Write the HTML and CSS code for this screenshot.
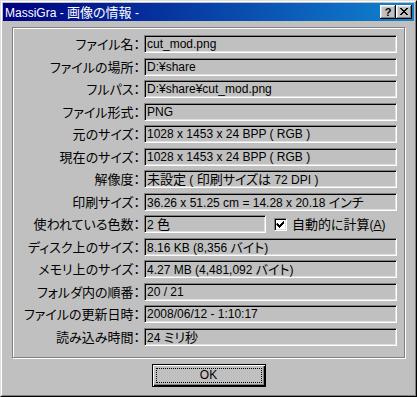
FILE: index.html
```html
<!DOCTYPE html>
<html lang="ja">
<head>
<meta charset="utf-8">
<link rel="stylesheet" href="styles.css">
</head>
<body>
<div class="window">
  <div class="frame">
    <div class="titlebar">
      <span class="title">MassiGra - <span class="ja">画像の情報</span> -</span>
      <div class="tbtns">
        <span class="tbtn q">?</span>
        <span class="tbtn x"><svg width="8" height="7" viewBox="0 0 8 7"><path d="M0 0h2v1h1v1h2v-1h1v-1h2v1h-1v1h-1v1h-1v1h1v1h1v1h1v1h-2v-1h-1v-1h-2v1h-1v1h-2v-1h1v-1h1v-1h1v-1h-1v-1h-1v-1h-1z" fill="#000"/></svg></span>
      </div>
    </div>
    <div class="content">
      <div class="group">
        <div class="lbl">ファイル名：</div><div class="fld">cut_mod.png</div>
        <div class="lbl">ファイルの場所：</div><div class="fld">D:¥share</div>
        <div class="lbl">フルパス：</div><div class="fld">D:¥share¥cut_mod.png</div>
        <div class="lbl">ファイル形式：</div><div class="fld">PNG</div>
        <div class="lbl">元のサイズ：</div><div class="fld">1028 x 1453 x 24 BPP ( RGB )</div>
        <div class="lbl">現在のサイズ：</div><div class="fld">1028 x 1453 x 24 BPP ( RGB )</div>
        <div class="lbl">解像度：</div><div class="fld"><span class="ja">未設定</span> ( <span class="ja">印刷サイズは</span> 72 DPI )</div>
        <div class="lbl">印刷サイズ：</div><div class="fld">36.26 x 51.25 cm = 14.28 x 20.18 <span class="ja">インチ</span></div>
        <div class="lbl">使われている色数：</div>
        <div class="colrow">
          <div class="fld short">2 <span class="ja">色</span></div>
          <span class="chk"><svg width="9" height="9" viewBox="0 0 9 9"><path d="M1 3h1v1h1v1h1v-1h1v-1h1v-1h1v-1h1v3h-1v1h-1v1h-1v1h-1v1h-1v-1h-1v-1h-1v-1h-1z" fill="#000"/></svg></span>
          <span class="chklbl"><span class="ja">自動的に計算</span>(<u>A</u>)</span>
        </div>
        <div class="lbl">ディスク上のサイズ：</div><div class="fld">8.16 KB (8,356 <span class="ja">バイト</span>)</div>
        <div class="lbl">メモリ上のサイズ：</div><div class="fld">4.27 MB (4,481,092 <span class="ja">バイト</span>)</div>
        <div class="lbl">フォルダ内の順番：</div><div class="fld">20 / 21</div>
        <div class="lbl">ファイルの更新日時：</div><div class="fld">2008/06/12 - 1:10:17</div>
        <div class="lbl">読み込み時間：</div><div class="fld">24 <span class="ja">ミリ秒</span></div>
      </div>
      <div class="btnrow">
        <div class="okbtn"><span class="focus">OK</span></div>
      </div>
    </div>
  </div>
</div>
</body>
</html>
```
FILE: styles.css
```css
html, body {
  margin: 0;
  padding: 0;
  background: #c0c0c0;
}
body {
  font-family: "Liberation Sans", "Noto Sans CJK JP", sans-serif;
  font-size: 12px;
  color: #000;
  font-feature-settings: "palt";
}
.ja {
  font-family: "Noto Sans CJK JP", sans-serif;
  font-size: 13px;
  line-height: 14px;
}
.window {
  width: 417px;
  height: 397px;
  box-sizing: border-box;
  border: 1px solid;
  border-color: #dfdfdf #000 #000 #dfdfdf;
  background: #c0c0c0;
}
.frame {
  height: 100%;
  box-sizing: border-box;
  border: 1px solid;
  border-color: #fff #808080 #808080 #fff;
  padding: 1px;
  display: flex;
  flex-direction: column;
}
.titlebar {
  height: 18px;
  flex: none;
  display: flex;
  align-items: center;
  justify-content: space-between;
  padding-left: 2px;
  background: linear-gradient(to right, #000080, #1084d0);
  color: #fff;
}
.title {
  font-size: 12px;
  line-height: 14px;
  white-space: nowrap;
}
.tbtns {
  display: flex;
  margin-right: 2px;
}
.tbtn {
  width: 16px;
  height: 14px;
  box-sizing: border-box;
  background: #c0c0c0;
  box-shadow: inset -1px -1px 0 #000, inset 1px 1px 0 #fff, inset -2px -2px 0 #808080, inset 2px 2px 0 #dfdfdf;
  display: flex;
  align-items: center;
  justify-content: center;
  color: #000;
}
.tbtn.q {
  font-family: "Liberation Sans", sans-serif;
  font-weight: bold;
  font-size: 11px;
  line-height: 12px;
  padding-bottom: 1px;
}
.tbtn.x svg {
  display: block;
  margin-top: -1px;
}
.content {
  flex: 1;
  padding: 6px 9px 0 9px;
  display: flex;
  flex-direction: column;
}
.group {
  height: 331px;
  box-sizing: border-box;
  border: 1px solid #808080;
  box-shadow: 1px 1px 0 #fff, inset 1px 1px 0 #fff;
  padding: 7px 7px 0 0;
  display: grid;
  grid-template-columns: 1fr 253px;
  grid-auto-rows: 18px;
  row-gap: 4.5px;
  column-gap: 4px;
  align-items: center;
}
.lbl {
  text-align: right;
  white-space: nowrap;
  line-height: 14px;
  font-family: "Noto Sans CJK JP", sans-serif;
  font-size: 13px;
}
.fld {
  height: 18px;
  box-sizing: border-box;
  border-style: solid;
  border-width: 1px;
  border-color: #808080 #fff #fff #808080;
  box-shadow: inset 1px 1px 0 #000, inset -1px -1px 0 #dfdfdf;
  padding: 1px 2px 0 2px;
  line-height: 14px;
  white-space: nowrap;
  overflow: hidden;
}
.colrow {
  display: flex;
  align-items: center;
  height: 18px;
}
.fld.short {
  width: 122px;
  flex: none;
}
.chk {
  width: 13px;
  height: 13px;
  box-sizing: border-box;
  margin-left: 8px;
  background: #fff;
  border-style: solid;
  border-width: 1px;
  border-color: #808080 #fff #fff #808080;
  box-shadow: inset 1px 1px 0 #000, inset -1px -1px 0 #dfdfdf;
  display: flex;
  align-items: center;
  justify-content: center;
}
.chk svg {
  display: block;
}
.chklbl {
  margin-left: 5px;
  white-space: nowrap;
  line-height: 14px;
}
.btnrow {
  display: flex;
  justify-content: center;
  margin-top: 6px;
}
.okbtn {
  width: 114px;
  height: 23px;
  box-sizing: border-box;
  border: 1px solid #000;
  background: #c0c0c0;
  box-shadow: inset 1px 1px 0 #fff, inset -1px -1px 0 #000, inset -2px -2px 0 #808080;
  padding: 3px;
  display: flex;
}
.focus {
  flex: 1;
  border: 1px dotted #000;
  display: flex;
  align-items: center;
  justify-content: center;
  line-height: 13px;
}
```
